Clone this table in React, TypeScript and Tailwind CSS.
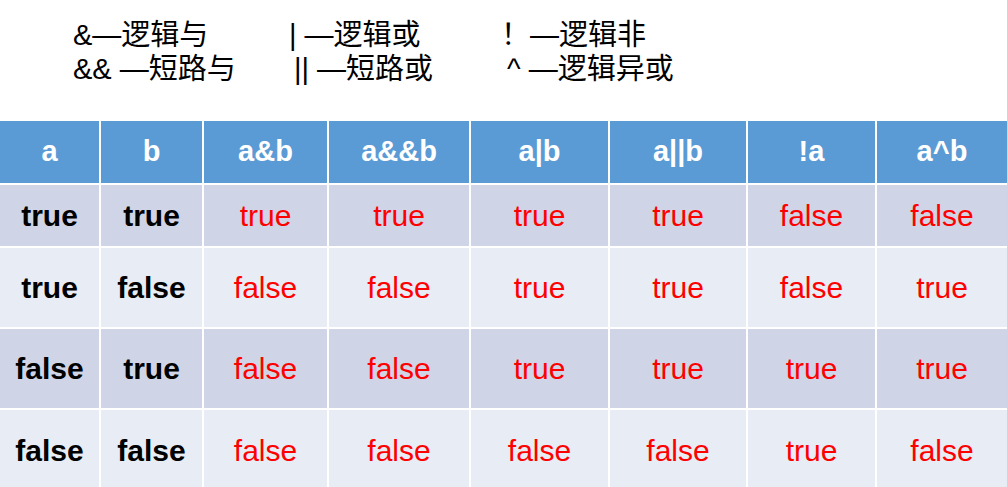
import React from "react";

const headers = ["a", "b", "a&b", "a&&b", "a|b", "a||b", "!a", "a^b"];

const rows: { cells: string[]; band: "odd" | "even"; h: string }[] = [
  { cells: ["true", "true", "true", "true", "true", "true", "false", "false"], band: "odd", h: "h-[61px]" },
  { cells: ["true", "false", "false", "false", "true", "true", "false", "true"], band: "even", h: "h-[79px]" },
  { cells: ["false", "true", "false", "false", "true", "true", "true", "true"], band: "odd", h: "h-[79px]" },
  { cells: ["false", "false", "false", "false", "false", "false", "true", "false"], band: "even", h: "h-[80px]" },
];

const font = { fontFamily: '"Liberation Sans", "Noto Sans CJK SC", sans-serif' };

export default function App() {
  return (
    <div className="w-[1007px] h-[487px] overflow-hidden bg-white" style={font}>
      {/* legend */}
      <div className="pt-[18px] pl-[73px] text-[29px] leading-[34px] text-black">
        <div className="flex">
          <span className="w-[216px]">&amp;—逻辑与</span>
          <span className="w-[212px]">| —逻辑或</span>
          <span>！—逻辑非</span>
        </div>
        <div className="flex">
          <span className="w-[216px]">&amp;&amp; —短路与</span>
          <span className="w-[212px] pl-[5px]">|| —短路或</span>
          <span className="pl-[6px]">^ —逻辑异或</span>
        </div>
      </div>

      {/* truth table */}
      <div className="mt-[35px] grid grid-cols-[99px_101px_123px_140px_137px_136px_127px_1fr] gap-[2px] bg-white">
        {headers.map((h) => (
          <div
            key={h}
            className="h-[62px] bg-[#5b9bd5] flex items-center justify-center text-white font-bold text-[29px]"
          >
            {h}
          </div>
        ))}
        {rows.map((row, ri) =>
          row.cells.map((c, ci) => (
            <div
              key={`${ri}-${ci}`}
              className={`${row.h} flex items-center justify-center text-[30px] ${
                row.band === "odd" ? "bg-[#cfd5e6]" : "bg-[#e8ecf4]"
              } ${ci < 2 ? "font-bold text-black" : "text-[#ff0000]"}`}
            >
              {c}
            </div>
          ))
        )}
      </div>
    </div>
  );
}
